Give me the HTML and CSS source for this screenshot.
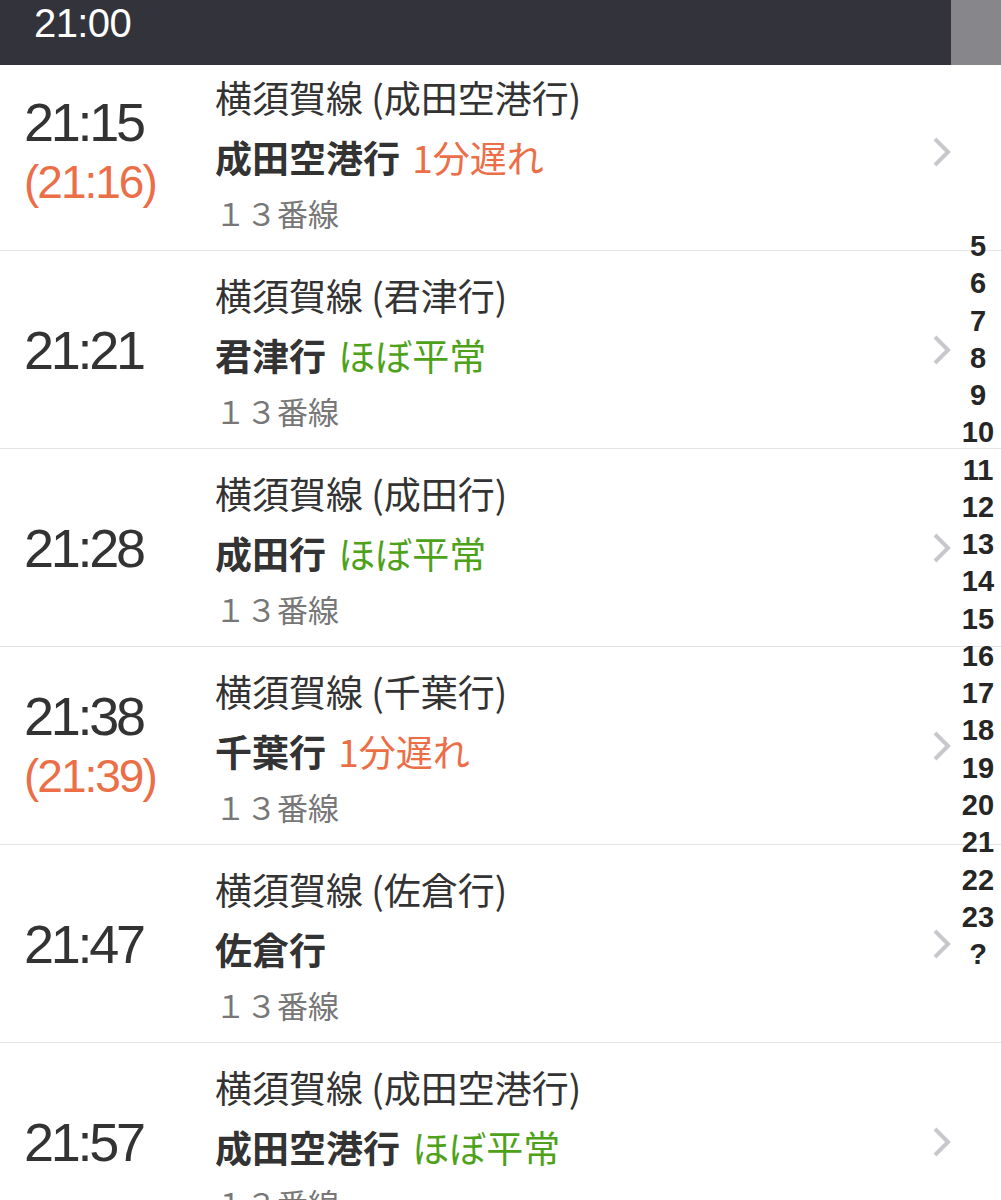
FILE: index.html
```html
<!DOCTYPE html>
<html lang="ja">
<head>
<meta charset="utf-8">
<link rel="stylesheet" href="styles.css">
</head>
<body>
<div class="page">
  <header class="header">
    <div class="header-time">21:00</div>
    <div class="header-side"></div>
  </header>
  <ul class="list">
    <li class="row">
      <div class="time"><div class="t">21:15</div><div class="t-delay">(21:16)</div></div>
      <div class="info">
        <div class="line">横須賀線 (成田空港行)</div>
        <div class="dest"><b>成田空港行</b> <span class="late">1分遅れ</span></div>
        <div class="track">１３番線</div>
      </div>
      <svg class="chev" viewBox="0 0 20 32" width="20" height="32"><path d="M3 3 L16 16 L3 29" fill="none" stroke="#c7c7cc" stroke-width="4"/></svg>
    </li>
    <li class="row">
      <div class="time"><div class="t">21:21</div></div>
      <div class="info">
        <div class="line">横須賀線 (君津行)</div>
        <div class="dest"><b>君津行</b> <span class="ok">ほぼ平常</span></div>
        <div class="track">１３番線</div>
      </div>
      <svg class="chev" viewBox="0 0 20 32" width="20" height="32"><path d="M3 3 L16 16 L3 29" fill="none" stroke="#c7c7cc" stroke-width="4"/></svg>
    </li>
    <li class="row">
      <div class="time"><div class="t">21:28</div></div>
      <div class="info">
        <div class="line">横須賀線 (成田行)</div>
        <div class="dest"><b>成田行</b> <span class="ok">ほぼ平常</span></div>
        <div class="track">１３番線</div>
      </div>
      <svg class="chev" viewBox="0 0 20 32" width="20" height="32"><path d="M3 3 L16 16 L3 29" fill="none" stroke="#c7c7cc" stroke-width="4"/></svg>
    </li>
    <li class="row">
      <div class="time"><div class="t">21:38</div><div class="t-delay">(21:39)</div></div>
      <div class="info">
        <div class="line">横須賀線 (千葉行)</div>
        <div class="dest"><b>千葉行</b> <span class="late">1分遅れ</span></div>
        <div class="track">１３番線</div>
      </div>
      <svg class="chev" viewBox="0 0 20 32" width="20" height="32"><path d="M3 3 L16 16 L3 29" fill="none" stroke="#c7c7cc" stroke-width="4"/></svg>
    </li>
    <li class="row">
      <div class="time"><div class="t">21:47</div></div>
      <div class="info">
        <div class="line">横須賀線 (佐倉行)</div>
        <div class="dest"><b>佐倉行</b></div>
        <div class="track">１３番線</div>
      </div>
      <svg class="chev" viewBox="0 0 20 32" width="20" height="32"><path d="M3 3 L16 16 L3 29" fill="none" stroke="#c7c7cc" stroke-width="4"/></svg>
    </li>
    <li class="row">
      <div class="time"><div class="t">21:57</div></div>
      <div class="info">
        <div class="line">横須賀線 (成田空港行)</div>
        <div class="dest"><b>成田空港行</b> <span class="ok">ほぼ平常</span></div>
        <div class="track">１３番線</div>
      </div>
      <svg class="chev" viewBox="0 0 20 32" width="20" height="32"><path d="M3 3 L16 16 L3 29" fill="none" stroke="#c7c7cc" stroke-width="4"/></svg>
    </li>
  </ul>
  <ol class="index">
    <li>5</li><li>6</li><li>7</li><li>8</li><li>9</li><li>10</li><li>11</li><li>12</li><li>13</li><li>14</li><li>15</li><li>16</li><li>17</li><li>18</li><li>19</li><li>20</li><li>21</li><li>22</li><li>23</li><li>?</li>
  </ol>
</div>
</body>
</html>
```
FILE: styles.css
```css
html, body {
  margin: 0;
  padding: 0;
  background: #fff;
}
body {
  font-family: "Noto Sans CJK JP", "Noto Sans", sans-serif;
  color: #333;
}
.page {
  position: relative;
  width: 1001px;
  height: 1200px;
  overflow: hidden;
}
.header {
  position: relative;
  z-index: 2;
  height: 65px;
  background: #33333b;
  display: flex;
}
.header-time {
  flex: 1;
  padding-left: 34px;
  font-family: "Liberation Sans", sans-serif;
  font-size: 40px;
  line-height: 46px;
  letter-spacing: -0.6px;
  color: #fff;
}
.header-side {
  width: 50px;
  background: #87868b;
}
.list {
  list-style: none;
  margin: -12px 0 0 0;
  padding: 0;
}
.row {
  display: flex;
  align-items: center;
  height: 197px;
  border-bottom: 1px solid #e3e3e3;
  box-sizing: content-box;
}
.time {
  width: 215px;
  padding-left: 24px;
  box-sizing: border-box;
  font-family: "Liberation Sans", sans-serif;
}
.t {
  font-size: 54px;
  line-height: 60px;
  letter-spacing: -3.3px;
  color: #333;
}
.t-delay {
  font-size: 46px;
  line-height: 60px;
  letter-spacing: -2px;
  color: #ec6e47;
}
.info {
  flex: 1;
  align-self: stretch;
  padding-top: 16px;
}
.line {
  font-size: 37px;
  line-height: 56px;
  height: 56px;
  white-space: nowrap;
}
.dest {
  font-size: 37px;
  line-height: 64px;
  height: 64px;
  white-space: nowrap;
}
.dest b {
  font-weight: 700;
}
.late,
.ok {
  margin-left: 4px;
}
.late {
  color: #ec6e47;
}
.ok {
  color: #4ea21a;
}
.track {
  font-size: 31px;
  line-height: 48px;
  height: 48px;
  color: #777;
}
.chev {
  margin-right: 49px;
  flex: none;
}
.index {
  position: absolute;
  z-index: 3;
  top: 228px;
  right: 0;
  width: 46px;
  margin: 0;
  padding: 0;
  list-style: none;
  text-align: center;
  font-family: "Liberation Sans", sans-serif;
  font-weight: 700;
  font-size: 29px;
  line-height: 37.26px;
  color: #262626;
}
```
